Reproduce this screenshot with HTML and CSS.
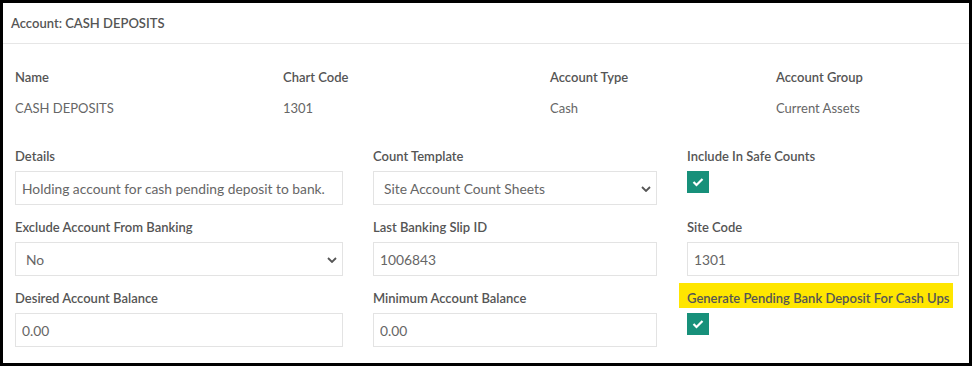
FILE: index.html
```html
<!DOCTYPE html>
<html lang="en">
<head>
    <meta charset="UTF-8">
    <title>Account: CASH DEPOSITS</title>
    <link rel="stylesheet" href="styles.css">
</head>
<body>
    <div class="acc-panel">
        <div class="acc-heading">Account: CASH DEPOSITS</div>
        <div class="acc-body">
            <div class="acc-summary">
                <div class="acc-item">
                    <div class="acc-label">Name</div>
                    <div class="acc-value">CASH DEPOSITS</div>
                </div>
                <div class="acc-item">
                    <div class="acc-label">Chart Code</div>
                    <div class="acc-value">1301</div>
                </div>
                <div class="acc-item">
                    <div class="acc-label">Account Type</div>
                    <div class="acc-value">Cash</div>
                </div>
                <div class="acc-item">
                    <div class="acc-label">Account Group</div>
                    <div class="acc-value">Current Assets</div>
                </div>
            </div>

            <form class="acc-form">
                <div class="acc-group">
                    <label class="acc-label" for="details">Details</label>
                    <input type="text" class="acc-input" id="details" value="Holding account for cash pending deposit to bank.">
                </div>
                <div class="acc-group">
                    <label class="acc-label" for="countTemplate">Count Template</label>
                    <div class="acc-select-wrap">
                        <select class="acc-select" id="countTemplate">
                            <option>Site Account Count Sheets</option>
                        </select>
                        <svg class="acc-chevron" width="10" height="6" viewBox="0 0 10 6"><polyline points="1,1 5,5 9,1" fill="none" stroke="#555" stroke-width="1.8"/></svg>
                    </div>
                </div>
                <div class="acc-group">
                    <label class="acc-label">Include In Safe Counts</label>
                    <span class="acc-check">
                        <svg width="12" height="10" viewBox="0 0 12 10"><polyline points="1.5,5 4.5,8 10.5,2" fill="none" stroke="#fff" stroke-width="2.2"/></svg>
                    </span>
                </div>

                <div class="acc-group">
                    <label class="acc-label" for="exclude">Exclude Account From Banking</label>
                    <div class="acc-select-wrap">
                        <select class="acc-select" id="exclude">
                            <option>No</option>
                            <option>Yes</option>
                        </select>
                        <svg class="acc-chevron" width="10" height="6" viewBox="0 0 10 6"><polyline points="1,1 5,5 9,1" fill="none" stroke="#555" stroke-width="1.8"/></svg>
                    </div>
                </div>
                <div class="acc-group">
                    <label class="acc-label" for="slipId">Last Banking Slip ID</label>
                    <input type="text" class="acc-input" id="slipId" value="1006843">
                </div>
                <div class="acc-group">
                    <label class="acc-label" for="siteCode">Site Code</label>
                    <input type="text" class="acc-input" id="siteCode" value="1301">
                </div>

                <div class="acc-group">
                    <label class="acc-label" for="desired">Desired Account Balance</label>
                    <input type="text" class="acc-input" id="desired" value="0.00">
                </div>
                <div class="acc-group">
                    <label class="acc-label" for="minimum">Minimum Account Balance</label>
                    <input type="text" class="acc-input" id="minimum" value="0.00">
                </div>
                <div class="acc-group">
                    <label class="acc-label acc-highlight">Generate Pending Bank Deposit For Cash Ups</label>
                    <span class="acc-check">
                        <svg width="12" height="10" viewBox="0 0 12 10"><polyline points="1.5,5 4.5,8 10.5,2" fill="none" stroke="#fff" stroke-width="2.2"/></svg>
                    </span>
                </div>
            </form>
        </div>
    </div>
</body>
</html>
```

FILE: styles.css
```css
body {
    font-family: Lato, 'Liberation Sans', Arial, sans-serif;
    background: #fff;
    margin: 0;
    padding: 0;
    color: #555;
}
.acc-panel {
    width: 972px;
    height: 366px;
    box-sizing: border-box;
    border: 3px solid #000;
    background: #fff;
}
.acc-heading {
    height: 40px;
    line-height: 40px;
    padding: 0 8px;
    border-bottom: 1px solid #e6e6e6;
    font-size: 13px;
    font-weight: 600;
    color: #555;
}
.acc-body {
    padding: 23px 12px 0 12px;
}
.acc-summary {
    display: grid;
    grid-template-columns: 268px 267px 226px 1fr;
    margin-bottom: 28px;
}
.acc-label {
    display: block;
    font-size: 13px;
    line-height: 20px;
    font-weight: 600;
    color: #555;
    white-space: nowrap;
}
.acc-value {
    margin-top: 11px;
    font-size: 13px;
    line-height: 20px;
    color: #666;
}
.acc-form {
    display: grid;
    grid-template-columns: 328px 284px 272px;
    column-gap: 30px;
    row-gap: 12px;
}
.acc-group .acc-label {
    margin-bottom: 5px;
}
.acc-input, .acc-select {
    display: block;
    width: 100%;
    height: 34px;
    box-sizing: border-box;
    border: 1px solid #e3e3e3;
    border-radius: 0;
    background: #fff;
    font-family: inherit;
    font-size: 13.8px;
    color: #666;
    padding: 0 6px;
    margin: 0;
    outline: none;
}
.acc-select {
    -webkit-appearance: none;
    appearance: none;
    padding: 0 24px 0 10px;
}
.acc-select-wrap {
    position: relative;
}
.acc-chevron {
    position: absolute;
    right: 6px;
    top: 15px;
    pointer-events: none;
}
.acc-check {
    display: flex;
    align-items: center;
    justify-content: center;
    width: 22px;
    height: 22px;
    background: #17907a;
}
.acc-highlight {
    background: #ffe600;
    margin-top: -5px;
    margin-left: -8px;
    padding: 5px 3px 0 8px;
    width: fit-content;
    height: 20px;
    line-height: 20px;
}
```
